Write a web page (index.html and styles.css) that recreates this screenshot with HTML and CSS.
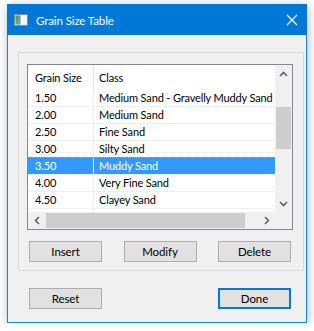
FILE: index.html
```html
<!DOCTYPE html>
<html lang="en">

<head>
    <meta charset="UTF-8">
    <meta name="viewport" content="width=device-width, initial-scale=1.0">
    <title>Grain Size Table</title>
    <link rel="stylesheet" href="styles.css">
</head>

<body>

    <div class="window">
        <div class="titlebar">
            <svg class="app-icon" width="14" height="12" viewBox="0 0 14 12">
                <defs>
                    <linearGradient id="pane" x1="0" y1="0" x2="1" y2="1">
                        <stop offset="0" stop-color="#3d8f7a" />
                        <stop offset="1" stop-color="#7bb8a2" />
                    </linearGradient>
                </defs>
                <rect x="0.5" y="0.5" width="13" height="11" fill="#e8e8e8" stroke="#8a8a8a" />
                <rect x="1.5" y="1.5" width="5" height="9" fill="url(#pane)" />
                <rect x="7.5" y="1.5" width="2" height="9" fill="#ffffff" />
                <rect x="10.5" y="1.5" width="2" height="9" fill="#ffffff" />
            </svg>
            <span class="title">Grain Size Table</span>
            <svg class="close" width="12" height="12" viewBox="0 0 12 12">
                <path d="M1 1 L11 11 M11 1 L1 11" stroke="#ffffff" stroke-width="1.1" fill="none" />
            </svg>
        </div>

        <div class="client">
            <div class="group">
                <div class="listview">
                    <div class="list-main">
                        <div class="list-area">
                            <div class="list-header">
                                <div class="cell col-size">Grain Size</div>
                                <div class="cell col-class">Class</div>
                            </div>
                            <div class="row">
                                <div class="cell col-size">1.50</div>
                                <div class="cell col-class">Medium Sand - Gravelly Muddy Sand</div>
                            </div>
                            <div class="row">
                                <div class="cell col-size">2.00</div>
                                <div class="cell col-class">Medium Sand</div>
                            </div>
                            <div class="row">
                                <div class="cell col-size">2.50</div>
                                <div class="cell col-class">Fine Sand</div>
                            </div>
                            <div class="row">
                                <div class="cell col-size">3.00</div>
                                <div class="cell col-class">Silty Sand</div>
                            </div>
                            <div class="row selected">
                                <div class="cell col-size">3.50</div>
                                <div class="cell col-class">Muddy Sand</div>
                            </div>
                            <div class="row">
                                <div class="cell col-size">4.00</div>
                                <div class="cell col-class">Very Fine Sand</div>
                            </div>
                            <div class="row">
                                <div class="cell col-size">4.50</div>
                                <div class="cell col-class">Clayey Sand</div>
                            </div>
                            <div class="row">
                                <div class="cell col-size">5.00</div>
                                <div class="cell col-class">Sandy Mud</div>
                            </div>
                        </div>
                        <div class="vscroll">
                            <div class="arrow-box">
                                <svg width="9" height="6" viewBox="0 0 9 6">
                                    <path d="M1 5 L4.5 1.5 L8 5" stroke="#606060" stroke-width="1.6" fill="none" />
                                </svg>
                            </div>
                            <div class="track-v">
                                <div class="thumb-v"></div>
                            </div>
                            <div class="arrow-box">
                                <svg width="9" height="6" viewBox="0 0 9 6">
                                    <path d="M1 1 L4.5 4.5 L8 1" stroke="#606060" stroke-width="1.6" fill="none" />
                                </svg>
                            </div>
                        </div>
                    </div>
                    <div class="hscroll-row">
                        <div class="hscroll">
                            <div class="arrow-box">
                                <svg width="6" height="9" viewBox="0 0 6 9">
                                    <path d="M5 1 L1.5 4.5 L5 8" stroke="#606060" stroke-width="1.6" fill="none" />
                                </svg>
                            </div>
                            <div class="track-h">
                                <div class="thumb-h"></div>
                            </div>
                            <div class="arrow-box">
                                <svg width="6" height="9" viewBox="0 0 6 9">
                                    <path d="M1 1 L4.5 4.5 L1 8" stroke="#606060" stroke-width="1.6" fill="none" />
                                </svg>
                            </div>
                        </div>
                        <div class="corner"></div>
                    </div>
                </div>

                <div class="button-row group-buttons">
                    <button class="btn">Insert</button>
                    <button class="btn">Modify</button>
                    <button class="btn">Delete</button>
                </div>
            </div>

            <div class="button-row dialog-buttons">
                <button class="btn">Reset</button>
                <button class="btn default">Done</button>
            </div>
        </div>
    </div>

</body>
</html>
```

FILE: styles.css
```css
body {
    font-family: Lato, "Noto Sans", sans-serif;
    font-size: 11px;
    letter-spacing: -0.15px;
    background-color: #ffffff;
    margin: 0;
    padding: 4px 0 0 7px;
}

.window {
    width: 300px;
    height: 319px;
    box-sizing: border-box;
    border: 1px solid #1883d7;
    background: #f0f0f0;
    box-shadow: 1px 2px 9px rgba(0, 0, 0, 0.3);
    display: flex;
    flex-direction: column;
}

.titlebar {
    height: 30px;
    flex: none;
    background: #0078d7;
    display: flex;
    align-items: center;
    padding: 0 9px 0 7px;
    margin: -1px -1px 0 -1px;
    padding-top: 1px;
}

.app-icon {
    flex: none;
}

.title {
    color: #ffffff;
    margin-left: 8px;
    flex: 1;
    font-size: 11.5px;
    letter-spacing: -0.1px;
}

.close {
    flex: none;
}

.client {
    padding: 17px 2px 0 10px;
}

.group {
    border: 1px solid #dcdcdc;
    padding: 11px 10px 8px 8px;
}

.listview {
    width: 266px;
    height: 166px;
    box-sizing: border-box;
    border: 1px solid #828790;
    background: #ffffff;
    display: flex;
    flex-direction: column;
}

.list-main {
    flex: 1;
    display: flex;
    min-height: 0;
}

.list-area {
    flex: 1;
    overflow: hidden;
    white-space: nowrap;
}

.list-header {
    display: flex;
    height: 25px;
    align-items: center;
}

.list-header .col-size {
    border-right: 1px solid #e5e5e5;
    height: 25px;
    line-height: 25px;
}

.row {
    display: flex;
    height: 17px;
    box-sizing: border-box;
    border-bottom: 1px solid #f0f0f0;
    color: #000000;
}

.cell {
    line-height: 16px;
    box-sizing: border-box;
}

.col-size {
    width: 66px;
    flex: none;
    padding-left: 7px;
    border-right: 1px solid #f0f0f0;
}

.col-class {
    flex: none;
    width: 200px;
    padding-left: 5px;
}

.row.selected {
    background: #3399ff;
    color: #ffffff;
    border-top: 1px dotted #e8953c;
    margin-top: -1px;
    height: 18px;
}

.row.selected .col-size {
    border-right-color: #d9ebff;
}

.vscroll {
    width: 17px;
    flex: none;
    background: #f0f0f0;
    display: flex;
    flex-direction: column;
}

.arrow-box {
    width: 17px;
    height: 17px;
    flex: none;
    display: flex;
    align-items: center;
    justify-content: center;
}

.track-v {
    flex: 1;
    padding-top: 25px;
}

.thumb-v {
    height: 42px;
    margin: 0 1px;
    background: #cdcdcd;
}

.hscroll-row {
    height: 17px;
    flex: none;
    display: flex;
}

.hscroll {
    flex: 1;
    display: flex;
    background: #f0f0f0;
}

.track-h {
    flex: 1;
    padding-left: 1px;
    display: flex;
    align-items: center;
}

.thumb-h {
    width: 199px;
    height: 15px;
    background: #cdcdcd;
}

.corner {
    width: 17px;
    background: #f0f0f0;
}

.button-row {
    display: flex;
    justify-content: space-between;
}

.group-buttons {
    margin-top: 11px;
    padding: 0 2px;
}

.dialog-buttons {
    margin-top: 17px;
    padding: 0 13px 0 11px;
}

.btn {
    width: 73px;
    height: 21px;
    box-sizing: border-box;
    border: 1px solid #adadad;
    background: #e1e1e1;
    font-family: Lato, "Noto Sans", sans-serif;
    font-size: 11.5px;
    letter-spacing: -0.1px;
    color: #000000;
    padding: 0;
    line-height: 17px;
}

.btn.default {
    border: 2px solid #0078d7;
}
```
